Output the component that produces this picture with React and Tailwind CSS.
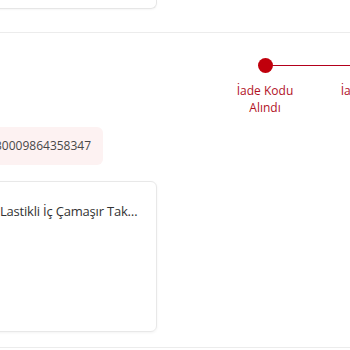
export default function App() {
  const steps = ["İade Kodu\nAlındı", "İade Kargoya\nVerildi"];
  return (
    <div
      className="w-[350px] h-[350px] overflow-hidden bg-white text-[#333]"
      style={{ fontFamily: "'Open Sans', 'Noto Sans', sans-serif" }}
    >
      <div className="h-[33px] border-b border-[#ececec]">
        <div className="w-[170px] -ml-[13px] h-[9px] border-r border-b border-[#e6e6e6] rounded-br-md shadow-[0_1px_2px_rgba(0,0,0,0.04)]" />
      </div>

      <div className="h-[315px] border-b border-[#ececec] flex flex-col">
        <div className="flex pl-[209px] pt-[25px]">
          {steps.map((s, i) => (
            <div key={i} className="w-[112px] shrink-0 flex flex-col items-center">
              <div className="w-full flex items-center">
                <div className={`flex-1 h-px ${i === 0 ? "bg-transparent" : "bg-[#b3001b]"}`} />
                <div className="w-[15px] h-[15px] rounded-full bg-[#c0000c]" />
                <div className="flex-1 h-px bg-[#b3001b]" />
              </div>
              <div className="mt-[9px] text-[12px] leading-[17px] text-[#b1121f] text-center whitespace-pre-line">
                {s}
              </div>
            </div>
          ))}
        </div>

        <div className="mt-[11px] -ml-[15px]">
          <div className="inline-flex items-center h-[38px] pl-[10px] pr-[12px] rounded-md bg-[#fdf2f2] text-[12px] text-[#484848]">
            30009864358347
          </div>
        </div>

        <div className="mt-[16px] -ml-[17px] w-[174px] h-[151px] border border-[#e8e8e8] rounded-md shadow-[0_1px_3px_rgba(0,0,0,0.05)] px-[16px] pt-[19px]">
          <div className="text-[13px] leading-[20px] tracking-[-0.2px] text-[#333] truncate">
            Lastikli İç Çamaşır Takımı Siyah
          </div>
        </div>
      </div>
    </div>
  );
}
